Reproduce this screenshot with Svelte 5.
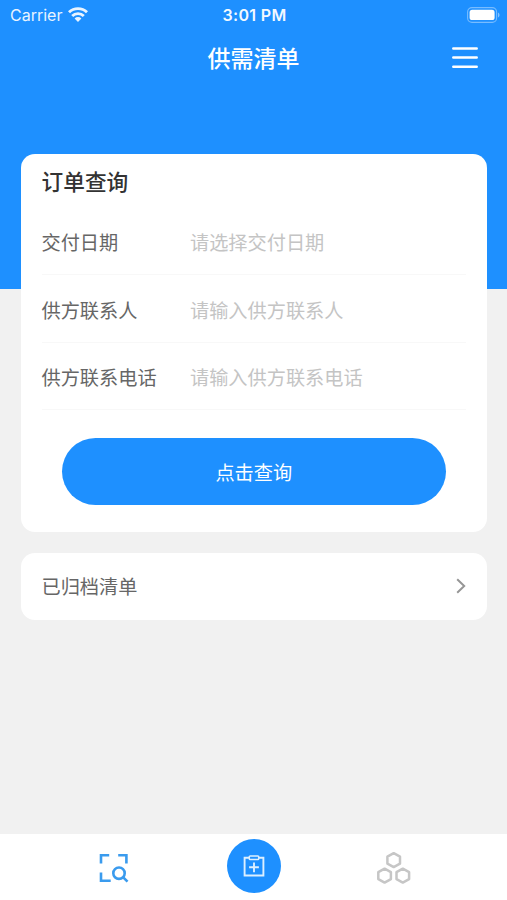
<script>
  let fields = $state([
    { id: 'date', label: '交付日期', placeholder: '请选择交付日期', value: '' },
    { id: 'contact', label: '供方联系人', placeholder: '请输入供方联系人', value: '' },
    { id: 'phone', label: '供方联系电话', placeholder: '请输入供方联系电话', value: '' }
  ]);
</script>

<div class="page">
  <header class="hero">
    <div class="status">
      <div class="carrier">
        <span>Carrier</span>
        <svg width="20" height="16" viewBox="0 0 20 16" fill="none" stroke="#fff" stroke-width="2.9">
          <path d="M1 5.300a12.800 12.800 0 0 1 18 0" />
          <path d="M4.200 9a8.200 8.200 0 0 1 11.600 0" />
          <path d="M10 14.900 6.600 11.500a4.800 4.800 0 0 1 6.800 0Z" fill="#fff" stroke="none" />
        </svg>
      </div>
      <span class="time">3:01 PM</span>
      <svg class="battery" width="34" height="16" viewBox="0 0 34 16">
        <rect x="0.6" y="0.6" width="29" height="14.8" rx="4.4" fill="none" stroke="#fff" stroke-opacity="0.4" stroke-width="1.1" />
        <rect x="2.6" y="2.8" width="25" height="10.2" rx="2.6" fill="#fff" />
        <path d="M31 5.500c2 .8 2 4.200 0 5Z" fill="#fff" fill-opacity="0.45" />
      </svg>
    </div>
    <div class="nav">
      <h1>供需清单</h1>
      <button class="menu" aria-label="menu">
        <svg width="26" height="22" viewBox="0 0 26 22" stroke="#fff" stroke-width="2.5" stroke-linecap="round">
          <path d="M1.300 1.500h23.400M1.300 10.600h23.400M1.300 19.800h23.400" />
        </svg>
      </button>
    </div>
  </header>

  <main>
    <section class="card query">
      <h2>订单查询</h2>
      {#each fields as field}
        <div class="row">
          <label for={field.id}>{field.label}</label>
          <input id={field.id} type="text" placeholder={field.placeholder} bind:value={field.value} />
        </div>
      {/each}
      <button class="submit">点击查询</button>
    </section>

    <section class="card archive">
      <span>已归档清单</span>
      <svg width="10" height="16" viewBox="0 0 10 16" fill="none" stroke="#969696" stroke-width="2">
        <path d="M1.200 1.300 8.200 8l-7 6.700" />
      </svg>
    </section>
  </main>

  <footer class="tabs">
    <button class="tab" aria-label="search">
      <svg width="30" height="30" viewBox="0 0 30 30" fill="none" stroke="#3a9bee" stroke-width="2.6">
        <path d="M2 10.500V2.300h8.200M19.200 2.300h8.200v8.200M2 19.500v8.200h9.700" />
        <circle cx="20" cy="20.200" r="5.700" />
        <path d="m24 24.200 4.500 4.500" />
      </svg>
    </button>
    <button class="tab" aria-label="add">
      <span class="add">
        <svg width="22" height="22" viewBox="0 0 22 22" fill="none" stroke="#dcefff" stroke-width="1.9">
          <path d="M6 2.700H1.600v17.800h18.800V2.700H16" />
          <rect x="6.300" y="1" width="9.400" height="3.600" rx="0.8" stroke-width="1.5" />
          <path d="M11 7.400v9.800M6.100 12.300h9.800" />
        </svg>
      </span>
    </button>
    <button class="tab" aria-label="more">
      <svg width="34" height="32" viewBox="0 0 34 32" fill="none" stroke="#c6c6c6" stroke-width="2.5" stroke-linejoin="round">
        <path d="m16.700 1.200 6.300 3.500v6.900l-6.300 3.500-6.300-3.500V4.700Z" />
        <path d="m7.600 16.700 6.300 3.500v6.900l-6.300 3.500-6.300-3.500v-6.900Z" />
        <path d="m25.800 16.700 6.300 3.500v6.900l-6.300 3.500-6.300-3.500v-6.900Z" />
      </svg>
    </button>
  </footer>
</div>

<style>
  :global(body) {
    margin: 0;
    background: #f1f1f1;
  }
  .page {
    display: flex;
    flex-direction: column;
    height: 100vh;
    overflow: hidden;
    color: #666;
    font-family: "Noto Sans CJK SC", sans-serif;
    font-size: 19.2px;
    line-height: 28px;
  }
  button {
    padding: 0;
    border: none;
    background: none;
    font-family: inherit;
    cursor: pointer;
  }
  svg {
    display: block;
  }
  .hero {
    flex: none;
    height: 289px;
    background: #1e90ff;
    color: #fff;
  }
  .status,
  .nav {
    display: grid;
    grid-template-columns: 1fr auto 1fr;
    align-items: center;
  }
  .status {
    height: 29px;
    padding: 0 6px 0 10px;
    font-family: Inter, sans-serif;
    font-size: 16px;
  }
  .carrier {
    display: flex;
    align-items: center;
    gap: 6px;
    opacity: 0.9;
  }
  .time {
    margin-right: 2px;
    font-weight: 600;
    letter-spacing: 0.35px;
    opacity: 0.95;
  }
  .battery,
  .menu {
    justify-self: end;
  }
  .nav {
    height: 58px;
    padding: 0 29px;
  }
  h1 {
    grid-column: 2;
    margin: 0 0 2px;
    font-size: 23px;
    font-weight: 500;
    line-height: 34px;
  }
  main {
    flex: 1;
    margin-top: -135px;
    padding: 0 20px 0 21px;
  }
  .card {
    border-radius: 14px;
    background: #fff;
  }
  .query {
    display: flex;
    flex-direction: column;
    height: 378px;
    padding: 0 21px 0 20.5px;
    box-sizing: border-box;
  }
  h2 {
    height: 54px;
    margin: 0;
    color: #333;
    font-size: 21.7px;
    font-weight: 500;
    line-height: 53px;
  }
  .row {
    display: flex;
    align-items: center;
    height: 67.4px;
    padding-top: 2px;
    border-bottom: 1px solid #f8f8f8;
    box-sizing: border-box;
  }
  label {
    width: 148.5px;
  }
  input {
    flex: 1;
    min-width: 0;
    height: 28px;
    padding: 0;
    border: none;
    outline: none;
    background: transparent;
    color: #666;
    font: inherit;
  }
  input::placeholder {
    color: #c4c4c4;
    opacity: 1;
  }
  .submit {
    height: 67px;
    margin: 28px 20px 0;
    border-radius: 34px;
    background: #1e90ff;
    color: #fff;
    font-size: 19.2px;
  }
  .archive {
    display: flex;
    align-items: center;
    justify-content: space-between;
    height: 67px;
    margin-top: 20.5px;
    padding: 0 21px 0 20.5px;
  }
  .tabs {
    display: grid;
    flex: none;
    grid-template-columns: repeat(3, 140px);
    justify-content: center;
    height: 66px;
    background: #fff;
  }
  .tab {
    display: flex;
    align-items: center;
    justify-content: center;
    padding-top: 1px;
  }
  .add {
    display: flex;
    align-items: center;
    justify-content: center;
    width: 54px;
    height: 54px;
    margin-bottom: 4px;
    border-radius: 50%;
    background: #1e90ff;
  }
</style>
